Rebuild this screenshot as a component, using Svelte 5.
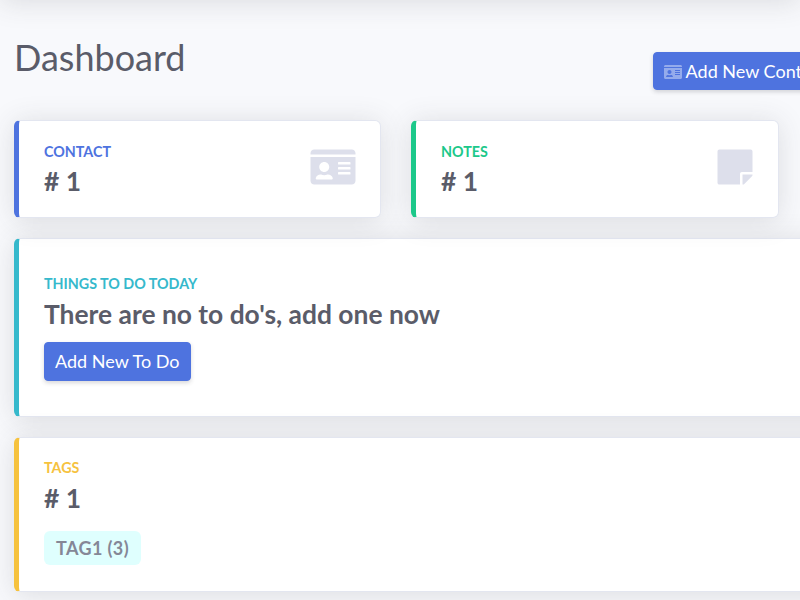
<script>
	const idCard =
		'M528 32H48C21.5 32 0 53.5 0 80v16h576V80c0-26.5-21.5-48-48-48zM0 432c0 26.5 21.5 48 48 48h480c26.5 0 48-21.5 48-48V128H0v304zm352-232c0-4.4 3.6-8 8-8h144c4.4 0 8 3.6 8 8v16c0 4.4-3.6 8-8 8H360c-4.4 0-8-3.6-8-8v-16zm0 64c0-4.4 3.6-8 8-8h144c4.4 0 8 3.6 8 8v16c0 4.4-3.6 8-8 8H360c-4.4 0-8-3.6-8-8v-16zm0 64c0-4.4 3.6-8 8-8h144c4.4 0 8 3.6 8 8v16c0 4.4-3.6 8-8 8H360c-4.4 0-8-3.6-8-8v-16zM176 192c35.3 0 64 28.7 64 64s-28.7 64-64 64-64-28.7-64-64 28.7-64 64-64zM67.1 396.2C75.5 370.5 99.6 352 128 352h8.2c12.3 5.1 25.7 8 39.8 8s27.6-2.9 39.8-8h8.2c28.4 0 52.5 18.5 60.9 44.2 3.2 9.9-5.2 19.8-15.6 19.8H82.7c-10.4 0-18.8-10-15.6-19.8z';
	const stickyNote =
		'M312 320h136V56c0-13.3-10.7-24-24-24H24C10.7 32 0 42.7 0 56v400c0 13.3 10.7 24 24 24h264V344c0-13.2 10.8-24 24-24zm129 55l-98 98c-4.5 4.5-10.6 7-17 7h-6V352h128v6.1c0 6.3-2.5 12.4-7 16.9z';
</script>

<div class="topbar"></div>

<main class="page">
	<header class="heading">
		<h1>Dashboard</h1>
		<button class="btn add-contact">
			<svg class="btn-icon" viewBox="0 0 576 512"><path d={idCard} /></svg>
			Add New Contact
		</button>
	</header>

	<section class="stats">
		<div class="card primary stat">
			<div>
				<div class="label">Contact</div>
				<div class="value"># 1</div>
			</div>
			<svg class="icon card-icon" viewBox="0 0 576 512"><path d={idCard} /></svg>
		</div>
		<div class="card success stat">
			<div>
				<div class="label">Notes</div>
				<div class="value"># 1</div>
			</div>
			<svg class="icon note-icon" viewBox="0 0 448 512"><path d={stickyNote} /></svg>
		</div>
	</section>

	<section class="card info todo">
		<div class="label">Things to do today</div>
		<div class="value">There are no to do's, add one now</div>
		<button class="btn">Add New To Do</button>
	</section>

	<section class="card warning tags">
		<div class="label">Tags</div>
		<div class="value"># 1</div>
		<span class="tag">TAG1 (3)</span>
	</section>
</main>

<style>
	:global(html),
	:global(body) {
		margin: 0;
		height: 600px;
		overflow: hidden;
		background: #f8f9fc;
	}

	/* the bar itself sits just above the fold, only its shadow shows */
	.topbar {
		height: 70px;
		margin-top: -70px;
		background: #fff;
		box-shadow: 0 2.4px 28px 0 rgba(58, 59, 69, 0.15);
	}

	.page {
		width: 825px;
		padding: 0 0 0 14px;
		font-family: Lato, sans-serif;
		color: #5a5c69;
	}

	.heading {
		display: flex;
		justify-content: space-between;
		align-items: flex-start;
		height: 120px;
	}

	h1 {
		margin: 37px 0 0;
		font-size: 36px;
		line-height: 40px;
		font-weight: 400;
	}

	.btn {
		display: block;
		padding: 6px 10px;
		border: 1px solid #4e73df;
		border-radius: 4px;
		background: #4e73df;
		color: #fff;
		font-family: inherit;
		font-size: 18px;
		line-height: 25px;
		white-space: nowrap;
		box-shadow: 0 2px 4px rgba(58, 59, 69, 0.2);
	}

	.add-contact {
		margin-top: 52px;
		padding: 5.5px 12px 5.5px 10px;
	}

	.btn-icon {
		width: 18px;
		height: 16px;
		vertical-align: -2px;
		fill: rgba(255, 255, 255, 0.4);
	}

	.stats {
		display: grid;
		grid-template-columns: 367px 368px;
		gap: 30px;
		margin-bottom: 20px;
	}

	.card {
		box-sizing: border-box;
		background: #fff;
		border: 1px solid #e3e6f0;
		border-left: 5px solid;
		border-radius: 6px;
		box-shadow: 0 2.4px 28px 0 rgba(58, 59, 69, 0.15);
		padding-left: 25px;
	}

	.primary {
		border-left-color: #4e73df;
	}
	.success {
		border-left-color: #1cc88a;
	}
	.info {
		border-left-color: #36b9cc;
	}
	.warning {
		border-left-color: #f6c23e;
	}

	.primary .label {
		color: #4e73df;
	}
	.success .label {
		color: #1cc88a;
	}
	.info .label {
		color: #36b9cc;
	}
	.warning .label {
		color: #f6c23e;
	}

	.label {
		margin-bottom: 5px;
		font-size: 14.3px;
		line-height: 20px;
		font-weight: 700;
		text-transform: uppercase;
	}

	.stat .label {
		margin-bottom: 4px;
	}

	.value {
		font-size: 26.4px;
		line-height: 31px;
		font-weight: 700;
	}

	.stat {
		height: 98px;
		display: flex;
		justify-content: space-between;
		align-items: center;
		padding-right: 24px;
	}

	.icon {
		fill: #dddfeb;
		height: 40px;
		margin-bottom: 4px;
	}

	.card-icon {
		width: 46px;
	}

	.note-icon {
		width: 36px;
		margin-right: 1px;
	}

	.todo {
		height: 179px;
		margin-bottom: 20px;
		padding-top: 35px;
	}

	.todo .btn {
		margin-top: 12px;
	}

	.tags {
		height: 155px;
		padding-top: 20px;
	}

	.tag {
		display: inline-block;
		margin-top: 17px;
		padding: 5px 12px;
		border-radius: 6px;
		background: #dffffe;
		color: #858796;
		font-size: 18px;
		letter-spacing: 0.4px;
		line-height: 24px;
		font-weight: 700;
	}
</style>
